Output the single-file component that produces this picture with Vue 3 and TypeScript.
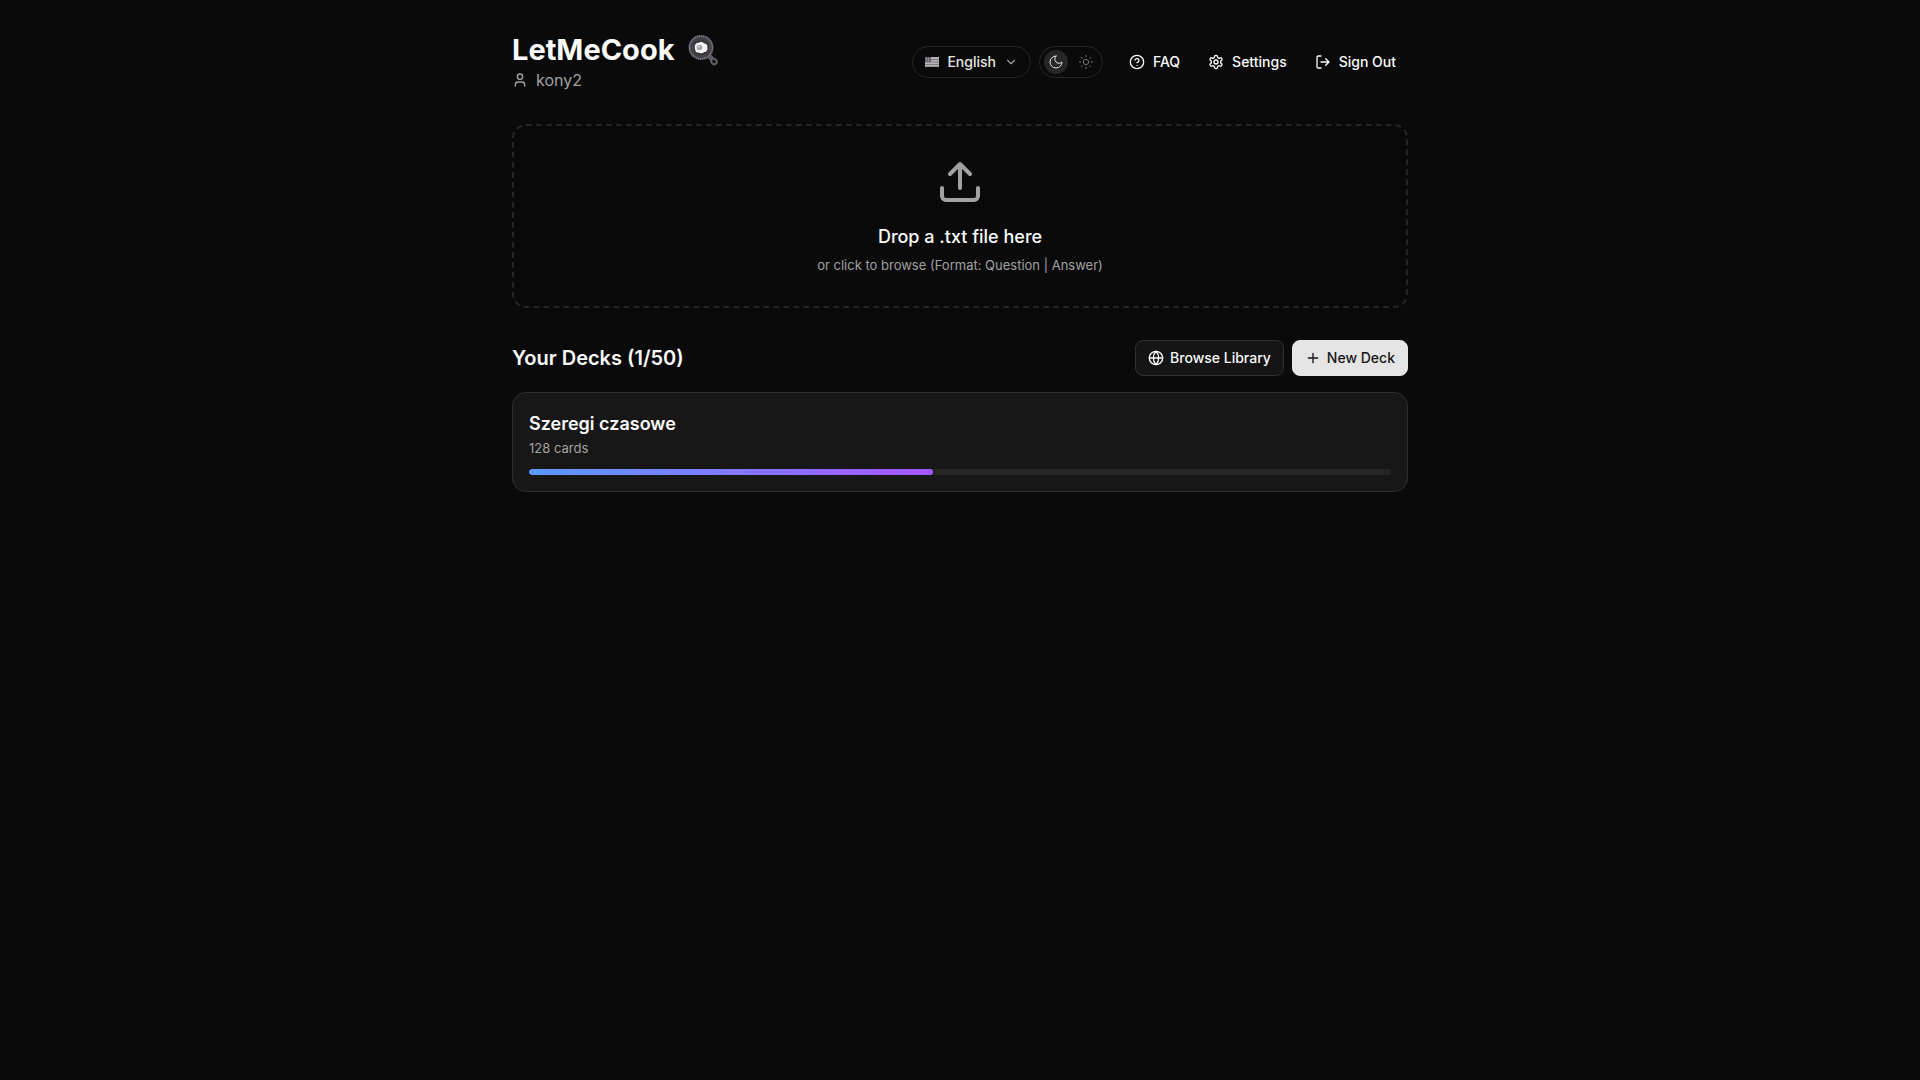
<script setup lang="ts">
import { ref } from 'vue'

interface Deck {
  name: string
  cards: number
  learned: number
}

const username = ref('kony2')
const language = ref('en')
const dark = ref(true)
const maxDecks = 50
const decks = ref<Deck[]>([{ name: 'Szeregi czasowe', cards: 128, learned: 60 }])

const progress = (deck: Deck): string => `${(deck.learned / deck.cards) * 100}%`
</script>

<template>
  <main class="page">
    <header class="header">
      <div class="brand">
        <h1 class="title">
          <span>LetMeCook</span>
          <svg class="pan" viewBox="0 0 32 32" aria-hidden="true">
            <path d="M22 22l3 3" stroke="#5b5662" stroke-width="5" stroke-linecap="round" />
            <ellipse cx="27" cy="27.500" rx="3" ry="2.500" transform="rotate(45 27 27.500)" fill="#0a0a0a" stroke="#625d69" stroke-width="2" />
            <circle cx="14" cy="13.500" r="12.500" fill="#4a4650" />
            <circle cx="14" cy="13.500" r="11.500" fill="none" stroke="#8a858f" stroke-width="1.500" stroke-dasharray="1 1" />
            <circle cx="14" cy="13.500" r="9.500" fill="#37343b" />
            <circle cx="14" cy="13.500" r="8.500" fill="none" stroke="#625e67" stroke-dasharray="1 1" />
            <path d="M7.800 13c-.3-2.800 1.700-4.600 4-4.300 1.500-1.200 4-1 5 .5 2.500.2 4 2 3.500 4 .8 2.500-.8 4.800-3 4.800-1.500 1.500-3.500 1.600-5 .7-2.500.2-4.300-1-4-3-.5-.8-.7-1.800-.5-2.700z" fill="#f4f4f4" />
            <circle cx="12.500" cy="13.500" r="2.800" fill="#a5a3a8" />
            <circle cx="11.800" cy="12.500" r="1" fill="#d0d0d0" />
          </svg>
        </h1>
        <p class="user">
          <svg class="icon" viewBox="0 0 24 24" aria-hidden="true">
            <circle cx="12" cy="7" r="4" />
            <path d="M19 21v-2a4 4 0 0 0-4-4H9a4 4 0 0 0-4 4v2" />
          </svg>
          <span>{{ username }}</span>
        </p>
      </div>

      <nav class="nav" aria-label="Account">
        <div class="controls">
          <label class="language">
            <svg class="flag" viewBox="0 0 14 10" aria-hidden="true">
              <rect width="14" height="10" fill="#b4b1b5" />
              <path d="M0 2.500h14M0 5h14M0 7.500h14" stroke="#807b81" />
              <path d="M0 9.500h14" stroke="#969398" />
              <rect width="6" height="5" fill="#66636e" />
              <path d="M1 1.500h4M1 3.500h4" stroke="#aaa8b0" stroke-dasharray="1 1" />
            </svg>
            <select v-model="language" class="select" aria-label="Language">
              <option value="en">English</option>
              <option value="pl">Polski</option>
            </select>
            <svg class="chevron" viewBox="0 0 24 24" aria-hidden="true"><path d="m6 9 6 6 6-6" /></svg>
          </label>
          <button class="theme" type="button" role="switch" :aria-checked="dark" aria-label="Dark theme" @click="dark = !dark">
            <span class="theme-slot" :class="{ active: dark }">
              <svg viewBox="0 0 24 24" aria-hidden="true"><path d="M12 3a6 6 0 0 0 9 9 9 9 0 1 1-9-9Z" /></svg>
            </span>
            <span class="theme-slot" :class="{ active: !dark }">
              <svg viewBox="0 0 24 24" aria-hidden="true">
                <circle cx="12" cy="12" r="4" />
                <path d="M12 2v2M12 20v2M4.930 4.930l1.410 1.410M17.660 17.660l1.410 1.410M2 12h2M20 12h2M6.340 17.660l-1.410 1.410M19.070 4.930l-1.410 1.410" />
              </svg>
            </span>
          </button>
        </div>
        <a class="link" href="#faq">
          <svg class="icon" viewBox="0 0 24 24" aria-hidden="true">
            <circle cx="12" cy="12" r="10" />
            <path d="M9.090 9a3 3 0 0 1 5.830 1c0 2-3 3-3 3M12 17h.01" />
          </svg>
          FAQ
        </a>
        <a class="link" href="#settings">
          <svg class="icon" viewBox="0 0 24 24" aria-hidden="true">
            <path d="M12.220 2h-.44a2 2 0 0 0-2 2v.18a2 2 0 0 1-1 1.730l-.43.25a2 2 0 0 1-2 0l-.15-.08a2 2 0 0 0-2.730.73l-.22.38a2 2 0 0 0 .73 2.730l.15.1a2 2 0 0 1 1 1.720v.51a2 2 0 0 1-1 1.740l-.15.09a2 2 0 0 0-.73 2.730l.22.38a2 2 0 0 0 2.730.73l.15-.08a2 2 0 0 1 2 0l.43.25a2 2 0 0 1 1 1.730V20a2 2 0 0 0 2 2h.44a2 2 0 0 0 2-2v-.18a2 2 0 0 1 1-1.730l.43-.25a2 2 0 0 1 2 0l.15.08a2 2 0 0 0 2.730-.73l.22-.39a2 2 0 0 0-.73-2.730l-.15-.08a2 2 0 0 1-1-1.740v-.5a2 2 0 0 1 1-1.740l.15-.09a2 2 0 0 0 .73-2.730l-.22-.38a2 2 0 0 0-2.730-.73l-.15.08a2 2 0 0 1-2 0l-.43-.25a2 2 0 0 1-1-1.730V4a2 2 0 0 0-2-2z" />
            <circle cx="12" cy="12" r="3" />
          </svg>
          Settings
        </a>
        <button class="link" type="button">
          <svg class="icon" viewBox="0 0 24 24" aria-hidden="true">
            <path d="M9 21H5a2 2 0 0 1-2-2V5a2 2 0 0 1 2-2h4M16 17l5-5-5-5M21 12H9" />
          </svg>
          Sign Out
        </button>
      </nav>
    </header>

    <label class="dropzone">
      <input class="file" type="file" accept=".txt" />
      <svg class="upload" viewBox="0 0 24 24" aria-hidden="true">
        <path d="M12 3v12M17 8l-5-5-5 5M21 15v4a2 2 0 0 1-2 2H5a2 2 0 0 1-2-2v-4" />
      </svg>
      <span class="drop-title">Drop a .txt file here</span>
      <span class="drop-hint">or click to browse (Format: Question | Answer)</span>
    </label>

    <section>
      <div class="section-head">
        <h2 class="section-title">Your Decks ({{ decks.length }}/{{ maxDecks }})</h2>
        <div class="actions">
          <button class="button" type="button">
            <svg class="icon" viewBox="0 0 24 24" aria-hidden="true">
              <circle cx="12" cy="12" r="10" />
              <path d="M12 2a14.500 14.500 0 0 0 0 20 14.500 14.500 0 0 0 0-20M2 12h20" />
            </svg>
            Browse Library
          </button>
          <button class="button primary" type="button">
            <svg class="icon" viewBox="0 0 24 24" aria-hidden="true"><path d="M5 12h14M12 5v14" /></svg>
            New Deck
          </button>
        </div>
      </div>

      <a v-for="deck in decks" :key="deck.name" class="card" href="#deck">
        <h3 class="card-title">{{ deck.name }}</h3>
        <p class="card-count">{{ deck.cards }} cards</p>
        <div class="track">
          <div class="fill" :style="{ width: progress(deck) }"></div>
        </div>
      </a>
    </section>
  </main>
</template>

<style>
body {
  margin: 0;
  background: #0a0a0a;
}
</style>

<style scoped>
.page {
  box-sizing: border-box;
  max-width: 960px;
  margin: 0 auto;
  padding: 32px;
  color: #fafafa;
  font-family: Inter, "Liberation Sans", sans-serif;
  font-size: 14px;
  line-height: 20px;
}
h1, h2, h3, p { margin: 0; }
svg {
  display: block;
  flex: none;
  fill: none;
  stroke-linejoin: round;
}
button, select {
  padding: 0;
  border: 0;
  background: none;
  color: inherit;
  font: inherit;
  cursor: pointer;
}
.icon {
  width: 16px;
  height: 16px;
  stroke: currentColor;
  stroke-width: 2;
  stroke-linecap: round;
}
.header {
  display: flex;
  align-items: center;
  justify-content: space-between;
  margin-bottom: 32px;
}
.title {
  display: flex;
  align-items: center;
  gap: 12px;
  font-size: 29px;
  font-weight: 700;
  line-height: 36px;
}
.pan {
  width: 32px;
  height: 32px;
}
.user {
  display: flex;
  align-items: center;
  gap: 8px;
  color: #a1a1a1;
  font-size: 16px;
  line-height: 24px;
}
.nav {
  display: flex;
  align-items: center;
  gap: 4px;
}
.controls {
  display: flex;
  gap: 8px;
  margin-right: 10px;
}
.language, .theme {
  box-sizing: border-box;
  display: flex;
  align-items: center;
  height: 32px;
  border: 1px solid #262626;
  border-radius: 16px;
}
.language {
  gap: 8px;
  padding: 0 12px;
}
.flag {
  width: 14px;
  height: 10px;
}
.select {
  appearance: none;
  field-sizing: content;
  color: #e5e5e5;
  font-weight: 500;
}
.select option { color: #171717; }
.chevron {
  width: 14px;
  height: 14px;
  stroke: #a1a1a1;
  stroke-width: 2;
  stroke-linecap: round;
}
.theme {
  justify-content: space-between;
  width: 64px;
  padding: 0 4px;
}
.theme-slot {
  display: flex;
  align-items: center;
  justify-content: center;
  width: 24px;
  height: 24px;
  border-radius: 50%;
  color: #737373;
}
.theme-slot.active {
  background: #262626;
  color: #e5e5e5;
}
.theme-slot svg {
  width: 16px;
  height: 16px;
  stroke: currentColor;
  stroke-width: 1.5;
  stroke-linecap: round;
}
.link {
  display: flex;
  align-items: center;
  gap: 8px;
  height: 32px;
  padding: 0 12px;
  color: #fafafa;
  font-weight: 500;
  text-decoration: none;
}
.dropzone {
  position: relative;
  display: flex;
  flex-direction: column;
  align-items: center;
  margin-bottom: 32px;
  padding: 32px;
  border: 2px dashed #262626;
  border-radius: 14px;
  cursor: pointer;
}
.file {
  position: absolute;
  inset: 0;
  opacity: 0;
}
.upload {
  width: 48px;
  height: 48px;
  margin-bottom: 16px;
  stroke: #a1a1a1;
  stroke-width: 2;
  stroke-linecap: round;
}
.drop-title {
  margin-bottom: 4px;
  font-size: 18px;
  font-weight: 500;
  line-height: 30px;
}
.drop-hint, .card-count {
  color: #a1a1a1;
  font-size: 13px;
  line-height: 18px;
}
.section-head {
  display: flex;
  align-items: center;
  justify-content: space-between;
  margin-bottom: 16px;
}
.section-title {
  font-size: 20px;
  font-weight: 600;
  line-height: 28px;
}
.actions {
  display: flex;
  gap: 8px;
}
.button {
  box-sizing: border-box;
  display: flex;
  align-items: center;
  gap: 6px;
  height: 36px;
  padding: 0 12px;
  border: 1px solid #303030;
  border-radius: 8px;
  background: #151515;
  font-weight: 500;
}
.primary {
  border-color: #e5e5e5;
  background: #e5e5e5;
  color: #171717;
}
.card {
  display: block;
  padding: 16px;
  border: 1px solid #2e2e2e;
  border-radius: 14px;
  background: #171717;
  color: inherit;
  text-decoration: none;
}
.card-title {
  font-size: 18px;
  font-weight: 600;
  line-height: 30px;
}
.track {
  height: 6px;
  margin-top: 12px;
  border-radius: 3px;
  background: #262626;
  overflow: hidden;
}
.fill {
  height: 100%;
  border-radius: 3px;
  background: linear-gradient(90deg, #5b9bff, #a855ff);
}
</style>
